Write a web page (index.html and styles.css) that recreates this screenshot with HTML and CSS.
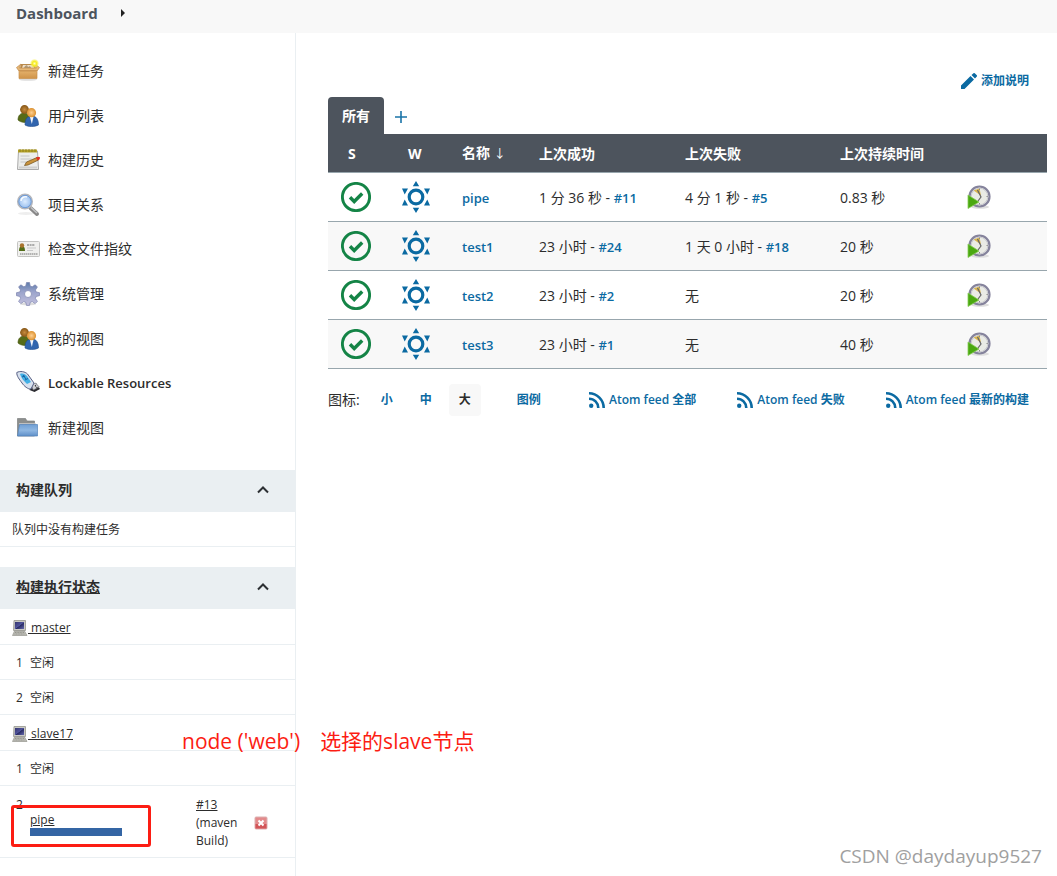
FILE: index.html
```html
<!DOCTYPE html>
<html lang="zh-CN">
<head>
<meta charset="utf-8">
<title>Dashboard [Jenkins]</title>
<link rel="stylesheet" href="styles.css">
</head>
<body>
<svg class="sprite" aria-hidden="true">
  <defs>
    <linearGradient id="gBox" x1="0" y1="0" x2="0" y2="1"><stop offset="0" stop-color="#e9b874"/><stop offset="1" stop-color="#cf9348"/></linearGradient>
    <linearGradient id="gGear" x1="0" y1="0" x2="0" y2="1"><stop offset="0" stop-color="#5d7caa"/><stop offset=".4" stop-color="#9aa3cb"/><stop offset="1" stop-color="#c4c1de"/></linearGradient>
    <linearGradient id="gFolder" x1="0" y1="0" x2="0" y2="1"><stop offset="0" stop-color="#709fd4"/><stop offset=".5" stop-color="#8fb7e2"/><stop offset="1" stop-color="#5f90c9"/></linearGradient>
    <linearGradient id="gScreen" x1="0" y1="0" x2="1" y2="1"><stop offset="0" stop-color="#34346d"/><stop offset=".5" stop-color="#50549c"/><stop offset=".55" stop-color="#292b64"/><stop offset="1" stop-color="#6568ad"/></linearGradient>
    <radialGradient id="gLens"><stop offset="0" stop-color="#dcecff"/><stop offset="1" stop-color="#94bbec"/></radialGradient>
    <radialGradient id="gHeadA"><stop offset="0" stop-color="#c58a3e"/><stop offset="1" stop-color="#875716"/></radialGradient>
    <radialGradient id="gHeadB"><stop offset="0" stop-color="#ffd091"/><stop offset="1" stop-color="#dc912f"/></radialGradient>
    <radialGradient id="gStar"><stop offset="0" stop-color="#fffec0"/><stop offset=".5" stop-color="#f6ed22"/><stop offset="1" stop-color="#f8ef45" stop-opacity=".4"/></radialGradient>
  </defs>
  <symbol id="i-box" viewBox="0 0 24 24">
    <ellipse cx="12" cy="20.500" rx="9" ry="1.300" fill="#ddd"/>
    <path d="M5 5h14l1 5H4z" fill="#b98a4c"/><path d="M7 6h10l1 3H6z" fill="#f0dfc7"/>
    <path d="M9 7l2-1 1 2 2-1 1 2H8z" fill="#b09a78"/>
    <path d="M3 10h18v9.500H3z" fill="url(#gBox)" stroke="#c78f4a" stroke-width=".7"/>
    <path d="M5 5L.5 8.500 2.500 11.500H21.500L23.500 8.500 19 5 20.500 9H3.500z" fill="#e6b878" stroke="#b98040" stroke-width=".6"/>
    <path d="M4 12.500h16" stroke="#d5a05b"/><circle cx="18.500" cy="4.500" r="4.200" fill="url(#gStar)"/>
  </symbol>
  <symbol id="i-users" viewBox="0 0 24 24">
    <path d="M2 16c0-5 3-7 6-7 4 0 6 3 6 8-3 2-9 2-12-1z" fill="#566b17" stroke="#42530c" stroke-width=".6"/>
    <circle cx="8.500" cy="5.500" r="4.400" fill="url(#gHeadA)"/>
    <path d="M9 21c0-6 2-9 7-9 4 0 6.500 3 6.500 9-4 2-10 2-13.500 0z" fill="#3165ae" stroke="#234e8c" stroke-width=".6"/>
    <path d="M14 13l1.800 7 1.700-7z" fill="#f4f7fc"/>
    <circle cx="15.500" cy="8.700" r="4.600" fill="url(#gHeadB)"/>
  </symbol>
  <symbol id="i-note" viewBox="0 0 24 24">
    <path d="M2.500 3h19l1 18.500h-21z" fill="#ecedeb" stroke="#aaa"/>
    <path d="M2 1.500h19v3H2z" fill="#b6a329"/><path d="M4 1v3M7 1v3M10 1v3M13 1v3M16 1v3M19 1v3" stroke="#80711a" stroke-width=".7"/>
    <path d="M4.500 8h9M4.500 11h11M4.500 14h6" stroke="#c4c6c7"/><path d="M3 19.500h18" stroke="#cfcfcf" stroke-width="2"/>
    <path d="M8.500 17.500l2-3.500L21 9.500l1.500 2.500-10.500 5z" fill="#c9933d" stroke="#6d4c17" stroke-width=".7"/>
    <path d="M20 9.800l2-1 2 .4-.3 2-2 1.200z" fill="#e22d21"/>
  </symbol>
  <symbol id="i-search" viewBox="0 0 24 24">
    <ellipse cx="10" cy="20.500" rx="8" ry="1.500" fill="#eee"/>
    <path d="M14.500 15l6.500 6" stroke="#888" stroke-width="4" stroke-linecap="round"/><path d="M15 14.500l6 5.500" stroke="#c2c3c5" stroke-width="1.600"/>
    <circle cx="9" cy="8.500" r="7.200" fill="url(#gLens)" stroke="#b4b6bc" stroke-width="1.700"/>
    <circle cx="9" cy="8.500" r="6.200" fill="none" stroke="#6d9bd8"/><path d="M5 8c0-3 3-5 6-4" stroke="#f5faff" stroke-width="1.600" fill="none"/>
  </symbol>
  <symbol id="i-card" viewBox="0 0 24 24">
    <rect x="1.500" y="4.500" width="22" height="15" rx="1" fill="#f0f0ee" stroke="#c4c4c2"/>
    <path d="M3 14c0-3.500 1-5 3-5s3 1.500 3 5z" fill="#536d19"/><circle cx="6" cy="8.500" r="2.200" fill="#a9742d"/>
    <path d="M11 8h8" stroke="#666" stroke-dasharray="2 .6"/><path d="M11 11h9M11 13.500h6" stroke="#c9c9c9"/><path d="M4 17h18" stroke="#767676" stroke-width="1.200" stroke-dasharray="1.500 .5"/>
  </symbol>
  <symbol id="i-gear" viewBox="0 0 24 24">
    <ellipse cx="12" cy="22" rx="8" ry="1.500" fill="#ddd"/>
    <path fill-rule="evenodd" fill="url(#gGear)" stroke="#7b83ae" stroke-width=".7" d="M10.500.5h3l.7 3.500 2 .8 3-2 2.200 2.200-2 3 .8 2 3.300.7v3l-3.300.7-.8 2 2 3-2.200 2.200-3-2-2 .8-.7 3h-3l-.7-3-2-.8-3 2-2.200-2.200 2-3-.8-2L.5 13.700v-3l3.300-.7.8-2-2-3 2.200-2.200 3 2 2-.8zM12 8.500a3.500 3.500 0 1 0 0 7 3.500 3.500 0 0 0 0-7z"/>
  </symbol>
  <symbol id="i-usb" viewBox="0 0 24 24">
    <path d="M15 14.500l5-2.500 4 6-5.500 3-5-2z" fill="#2b2b30"/><path d="M15 14l4.500-2 3.800 4-6 3z" fill="#cfd0d5" stroke="#707078" stroke-width=".6"/>
    <path d="M.8 1.500C4-.3 9 .5 11.500 3L18 12l-3 6c-3 .5-7-3-9-6C3.500 8.500.5 5 .8 1.500z" fill="#d8e1ee" stroke="#555e83"/>
    <path d="M4 3c3-1 5 0 7 2l4 6-4 2C8 10 5 7 4 3z" fill="#42afe5"/><path d="M7 4l3 4M6 6l3-1M9 9l3-1.500" stroke="#17619f"/>
    <path d="M19 15l1-.5M20.500 17l1-.5" stroke="#333" stroke-width="1.400"/>
  </symbol>
  <symbol id="i-folder" viewBox="0 0 24 24">
    <path d="M1.500 20V2.500h8L11 5h7.500v15z" fill="#8c8e8d" stroke="#7d8080" stroke-width=".7"/>
    <path d="M3 8h16.500" stroke="#c0c0c0" stroke-width="2"/>
    <path d="M3.500 8.500h18v11.500h-20z" fill="url(#gFolder)" stroke="#5584bb" stroke-width=".7"/>
  </symbol>
  <symbol id="i-pc" viewBox="0 0 16 16">
    <path d="M2 .5h11.500v10H1.500z" fill="#c9c9c3" stroke="#a5a59e"/><path d="M3 2h9v7H2.800z" fill="url(#gScreen)"/>
    <path d="M2.500 11h10l2.500 4.500H.5z" fill="#bdbdb6" stroke="#96968f" stroke-width=".7"/><path d="M3 12.500h9M2.500 14h10" stroke="#85857e" stroke-width=".7" stroke-dasharray="1 .6"/>
  </symbol>
  <symbol id="i-stop" viewBox="0 0 14 14">
    <rect x="1" y="1" width="12" height="12" rx="1" fill="#e38a8b" stroke="#dcb0b1"/><path d="M1.500 8h11v4.500h-11z" fill="#d25558"/>
    <path d="M4.500 4.500l5 5m0-5l-5 5" stroke="#fff" stroke-width="2"/>
  </symbol>
  <symbol id="i-chevron" viewBox="0 0 12 8"><path d="M1 6.500l5-5 5 5" fill="none" stroke="#2c2f33" stroke-width="2"/></symbol>
  <symbol id="i-ok" viewBox="0 0 30 30">
    <circle cx="15" cy="15" r="13.600" fill="none" stroke="#148446" stroke-width="2.900"/><path d="M9 15.300l4.200 4.200 8-8" fill="none" stroke="#148446" stroke-width="3.400"/>
  </symbol>
  <symbol id="i-sun" viewBox="0 0 28 32">
    <circle cx="14" cy="16" r="6.800" fill="none" stroke="#0b6aa2" stroke-width="3.200"/>
    <path fill="#0b6aa2" d="M14 0l3.200 5.200h-6.400zM14 32l3.200-5.200h-6.400zM0 7.500h6l-3.300 6zM28 7.500h-6l3.300 6zM0 24.500h6l-3.300-6zM28 24.500h-6l3.300-6z"/>
  </symbol>
  <symbol id="i-build" viewBox="0 0 24 24">
    <ellipse cx="13" cy="22" rx="9" ry="1.800" fill="#dedede"/>
    <circle cx="12.500" cy="11.500" r="10" fill="#eaebe5" stroke="#85839c" stroke-width="2.200"/><circle cx="12.500" cy="11.500" r="8.300" fill="none" stroke="#c9c9cf"/>
    <path d="M6.500 5.500l6-2 1.500 7z" fill="#d9b650"/><path d="M10.500 5l3.500 7-3 4" fill="none" stroke="#666" stroke-width="1.200"/>
    <path d="M12.500 3.500v1.500M19.500 11.500h1.300M12.500 18v1.500" stroke="#888"/><path d="M1 10v13.500L12 17z" fill="#4aa810" stroke="#87cc56" stroke-width=".8"/>
  </symbol>
  <symbol id="i-pencil" viewBox="0 0 16 16"><path fill="#0b6aa2" d="M0 12.500L9.500 3l3.500 3.500L3.500 16H0zM10.500 2l1.700-1.600a1.300 1.300 0 0 1 1.800 0l1.600 1.600a1.300 1.300 0 0 1 0 1.800L14 5.500z"/></symbol>
  <symbol id="i-rss" viewBox="0 0 16 16"><circle cx="2.200" cy="13.800" r="2.200" fill="#0b6aa2"/><path d="M0 6.700A9.300 9.300 0 0 1 9.300 16M0 1.300A14.700 14.700 0 0 1 14.700 16" fill="none" stroke="#0b6aa2" stroke-width="2.600"/></symbol>
</svg>

<header class="breadcrumbs">
  <a href="#">Dashboard</a>
  <svg class="crumb-arrow" viewBox="0 0 4 8"><path d="M0 0l4 4-4 4z" fill="#222"/></svg>
</header>

<div class="page">
  <aside class="sidebar">
    <nav class="tasks">
      <a href="#"><svg><use href="#i-box"/></svg>新建任务</a>
      <a href="#"><svg><use href="#i-users"/></svg>用户列表</a>
      <a href="#"><svg><use href="#i-note"/></svg>构建历史</a>
      <a href="#"><svg><use href="#i-search"/></svg>项目关系</a>
      <a href="#"><svg><use href="#i-card"/></svg>检查文件指纹</a>
      <a href="#"><svg><use href="#i-gear"/></svg>系统管理</a>
      <a href="#"><svg><use href="#i-users"/></svg>我的视图</a>
      <a href="#" class="latin"><svg><use href="#i-usb"/></svg>Lockable Resources</a>
      <a href="#"><svg><use href="#i-folder"/></svg>新建视图</a>
    </nav>

    <section class="pane">
      <h2>构建队列<button type="button" aria-label="收起构建队列"><svg><use href="#i-chevron"/></svg></button></h2>
      <p class="queue-empty">队列中没有构建任务</p>
    </section>

    <section class="pane">
      <h2><a href="#">构建执行状态</a><button type="button" aria-label="收起构建执行状态"><svg><use href="#i-chevron"/></svg></button></h2>
      <ul class="executors">
        <li class="node"><svg><use href="#i-pc"/></svg><a href="#">&nbsp;master</a></li>
        <li><span class="num">1</span>空闲</li>
        <li><span class="num">2</span>空闲</li>
        <li class="node"><svg><use href="#i-pc"/></svg><a href="#">&nbsp;slave17</a></li>
        <li><span class="num">1</span>空闲</li>
        <li class="running">
          <span class="num">2</span>
          <div class="job"><a href="#">pipe</a><div class="progress"></div><div class="mark"></div></div>
          <div class="run"><a href="#">#13</a> (maven Build)</div>
          <button type="button" class="stop" aria-label="停止"><svg><use href="#i-stop"/></svg></button>
        </li>
      </ul>
    </section>
  </aside>

  <main class="content">
    <div class="description"><a href="#"><svg><use href="#i-pencil"/></svg>添加说明</a></div>
    <div class="tabs"><a class="tab" href="#">所有</a><a class="add" href="#" aria-label="新建视图"><svg viewBox="0 0 12 12"><path d="M6 0v12M0 6h12" stroke="#1a74a8" stroke-width="1.600"/></svg></a></div>
    <table class="jobs">
      <colgroup><col class="c-s"><col class="c-w"><col class="c-name"><col class="c-ok"><col class="c-fail"><col class="c-time"><col></colgroup>
      <thead><tr><th class="s">S</th><th class="w">W</th><th>名称 <span class="sort">↓</span></th><th>上次成功</th><th>上次失败</th><th>上次持续时间</th><th></th></tr></thead>
      <tbody>
        <tr><td class="status"><svg class="ok"><use href="#i-ok"/></svg></td><td class="weather"><svg class="sun"><use href="#i-sun"/></svg></td><td><a href="#">pipe</a></td><td>1 分 36 秒 - <a href="#">#11</a></td><td>4 分 1 秒 - <a href="#">#5</a></td><td>0.83 秒</td><td class="action"><button type="button" aria-label="构建 pipe"><svg><use href="#i-build"/></svg></button></td></tr>
        <tr><td class="status"><svg class="ok"><use href="#i-ok"/></svg></td><td class="weather"><svg class="sun"><use href="#i-sun"/></svg></td><td><a href="#">test1</a></td><td>23 小时 - <a href="#">#24</a></td><td>1 天 0 小时 - <a href="#">#18</a></td><td>20 秒</td><td class="action"><button type="button" aria-label="构建 test1"><svg><use href="#i-build"/></svg></button></td></tr>
        <tr><td class="status"><svg class="ok"><use href="#i-ok"/></svg></td><td class="weather"><svg class="sun"><use href="#i-sun"/></svg></td><td><a href="#">test2</a></td><td>23 小时 - <a href="#">#2</a></td><td>无</td><td>20 秒</td><td class="action"><button type="button" aria-label="构建 test2"><svg><use href="#i-build"/></svg></button></td></tr>
        <tr><td class="status"><svg class="ok"><use href="#i-ok"/></svg></td><td class="weather"><svg class="sun"><use href="#i-sun"/></svg></td><td><a href="#">test3</a></td><td>23 小时 - <a href="#">#1</a></td><td>无</td><td>40 秒</td><td class="action"><button type="button" aria-label="构建 test3"><svg><use href="#i-build"/></svg></button></td></tr>
      </tbody>
    </table>
    <div class="table-footer">
      <span class="label">图标:</span>
      <div class="sizes"><a href="#">小</a><a href="#">中</a><span class="current">大</span></div>
      <a class="legend" href="#">图例</a>
      <div class="feeds">
        <a href="#"><svg><use href="#i-rss"/></svg>Atom feed 全部</a>
        <a href="#"><svg><use href="#i-rss"/></svg>Atom feed 失败</a>
        <a href="#"><svg><use href="#i-rss"/></svg>Atom feed 最新的构建</a>
      </div>
    </div>
  </main>
</div>
<div class="note"><span>node ('web')</span><span>选择的slave节点</span></div>
<div class="watermark">CSDN @daydayup9527</div>
</body>
</html>
```
FILE: styles.css
```css
* { box-sizing: border-box; }

body {
  position: relative;
  margin: 0;
  min-height: 100vh;
  display: flex;
  flex-direction: column;
  background: #fff;
  color: #2c2c2c;
  font: 14px/20px "Open Sans", "Noto Sans CJK SC", sans-serif;
}

a { color: inherit; text-decoration: none; }
svg { display: block; flex: none; }
button { padding: 0; border: 0; background: none; }
.sprite { position: absolute; width: 0; height: 0; }

.breadcrumbs {
  display: flex;
  align-items: center;
  gap: 23px;
  height: 33px;
  padding: 0 16px 8px;
  background: #f8f8f8;
  color: #4d545d;
  font-size: 15px;
  font-weight: 700;
}
.crumb-arrow { width: 4px; height: 8px; }

.page { display: flex; flex: 1; }

.sidebar {
  width: 296px;
  flex: none;
  border-right: 1px solid #eaeff2;
}
.tasks {
  display: grid;
  grid-auto-rows: 1fr;
  min-height: 401px;
  margin: 16px 0 20px;
}
.tasks a { display: flex; align-items: center; gap: 8px; padding-left: 16px; }
.tasks svg { width: 24px; height: 24px; }
.tasks .latin { font-weight: 600; font-size: 13px; }

.pane { margin-bottom: 20px; }
.pane h2 {
  display: flex;
  align-items: center;
  justify-content: space-between;
  margin: 0;
  padding: 10px 26px 12px 16px;
  background: #eaeff2;
  font-size: 14px;
  line-height: 20px;
  font-weight: 700;
}
.pane a { text-decoration: underline; }
.pane h2 svg { width: 12px; height: 8px; }
.queue-empty {
  margin: 0;
  padding: 8px 12px 6px;
  border-bottom: 1px solid #eaeff2;
  font-size: 12px;
}

.executors { margin: 0; padding: 0; list-style: none; font-size: 12px; }
.executors li {
  display: flex;
  align-items: center;
  min-height: 35px;
  padding: 2px 0 0 16px;
  border-bottom: 1px solid #eaeff2;
}
.executors .node { min-height: 36px; padding-left: 12px; font-weight: 500; }
.node svg { width: 16px; height: 16px; }
.num { width: 14px; }
.executors .running { align-items: flex-start; padding: 10px 27px 7px 16px; line-height: 18px; }
.job { position: relative; width: 92px; padding-top: 15px; line-height: 17px; font-weight: 500; }
.progress { height: 8px; background: #3465a4; }
.mark {
  position: absolute;
  top: 9px;
  left: -19px;
  width: 140px;
  height: 42px;
  border: 3px solid #fc1d13;
  border-radius: 3px;
}
.run { width: 44px; margin-left: 74px; }
.run a { font-weight: 500; }
.stop { align-self: center; margin-left: auto; }
.stop svg { width: 14px; height: 14px; }

.content { flex: 1; min-width: 0; padding: 32px 10px 0 32px; }
.content a { color: #0b6aa2; font-weight: 600; }
.description { display: flex; justify-content: flex-end; padding: 6px 18px 6px 0; }
.description a { display: flex; align-items: center; gap: 4px; font-size: 12px; }
.description svg { width: 16px; height: 16px; }

.tabs { display: flex; height: 37px; }
.content .tab {
  padding: 9px 14px;
  border-radius: 4px 4px 0 0;
  background: #4d545d;
  color: #fff;
  font-weight: 700;
}
.add { display: flex; align-items: center; padding: 2px 11px 0; }
.add svg { width: 12px; height: 12px; }

.jobs { width: 100%; table-layout: fixed; border-collapse: collapse; }
.c-s { width: 60px; }
.c-w { width: 60px; }
.c-name { width: 77px; }
.c-ok { width: 146px; }
.c-fail { width: 155px; }
.c-time { width: 127px; }
.jobs tr { height: 49px; border-bottom: 1px solid #98a6ad; }
.jobs thead tr { height: 38px; background: #4d545d; color: #fff; }
.jobs tbody tr:nth-child(even) { background: #f8f8f8; }
.jobs th, .jobs td { padding: 2px 0 0 14px; text-align: left; white-space: nowrap; }
.jobs .status { padding: 0 0 0 13px; }
.jobs .weather, .jobs .action { padding-top: 0; }
.jobs td a { font-size: 13px; }
.jobs th.s { padding-left: 20px; }
.jobs th.w { padding-left: 20px; }
.sort { font-size: 12px; font-weight: 400; }
.ok { width: 30px; height: 30px; }
.sun { width: 28px; height: 32px; }
.jobs button { display: block; }
.jobs button svg { width: 24px; height: 24px; }

.table-footer { display: flex; align-items: center; margin-top: 15px; font-size: 12px; }
.label { margin-right: 11px; font-size: 14px; }
.sizes { display: flex; gap: 7px; }
.sizes > * { width: 32px; padding: 6px 0; border-radius: 4px; text-align: center; }
.current { background: #f8f8f8; font-weight: 600; }
.legend { margin-left: 36px; }
.feeds { display: flex; gap: 41px; margin-left: auto; padding-right: 18px; }
.feeds a { display: flex; align-items: center; gap: 4px; }
.feeds svg { width: 16px; height: 16px; }

.note {
  position: absolute;
  top: 726px;
  left: 182px;
  display: flex;
  gap: 20px;
  color: #fc1d13;
  font-size: 21px;
  line-height: 30px;
}
.watermark {
  position: absolute;
  right: 15px;
  top: 842px;
  color: #a0a0a0;
  font-size: 19px;
  line-height: 28px;
}
```
